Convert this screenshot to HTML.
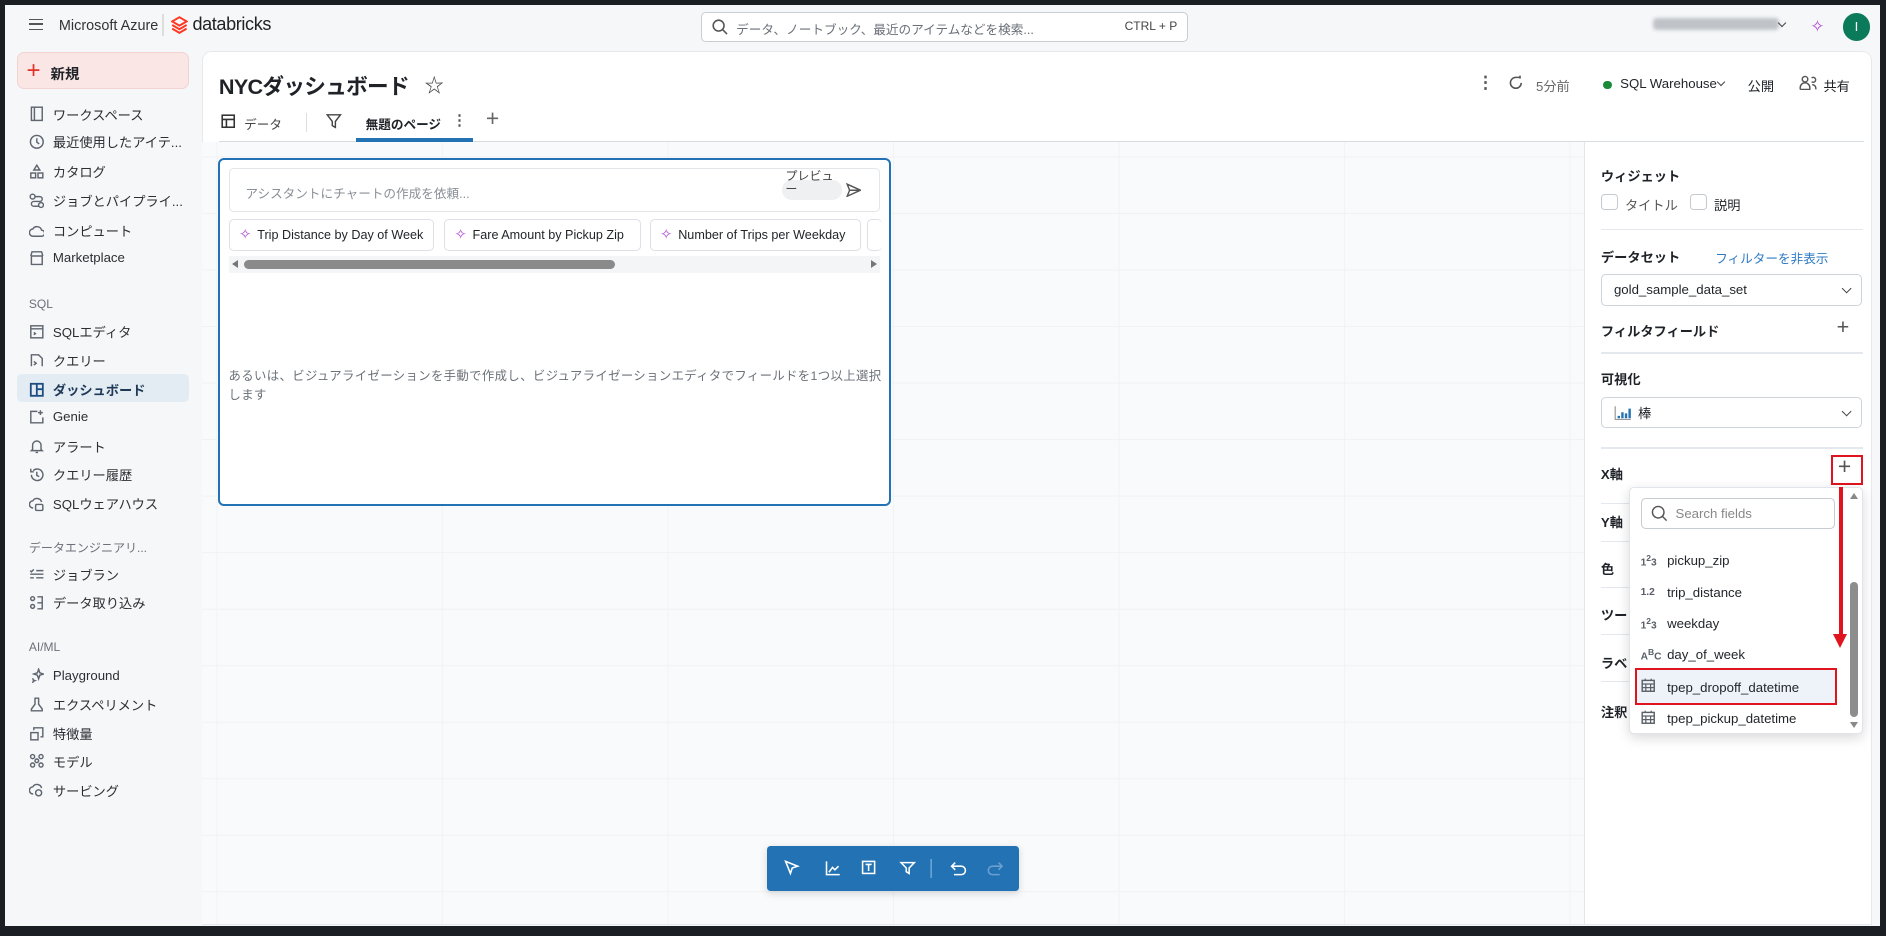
<!DOCTYPE html>
<html><head><meta charset="utf-8"><style>
*{box-sizing:border-box;margin:0;padding:0}
html,body{width:1886px;height:936px;overflow:hidden;background:#1b1f24}
#w{zoom:1.2028;position:relative;width:1568px;height:778px;background:#1b1f24;font-family:"Liberation Sans","Noto Sans CJK JP",sans-serif;color:#1f2328;font-size:11px}
.abs{position:absolute}
#app{left:4px;top:4px;width:1559px;height:766px;background:#f6f7f9}
.nav{position:absolute;left:24px;display:flex;align-items:center;font-size:11px;color:#2b2f33}
.nav svg{width:13px;height:13px;margin-right:7px;stroke:#5f6670;fill:none;stroke-width:1.2}
.sec{position:absolute;left:24px;font-size:10px;color:#6b7178}
.rp{position:absolute;font-size:11px}
.b{font-weight:bold}
.sel{position:absolute;left:1331px;width:217px;height:26px;border:1px solid #cfd4da;border-radius:4px;background:#fff;font-size:11px;display:flex;align-items:center;padding-left:10px}
.chev{position:absolute;right:9px;top:8px;width:6px;height:6px;border-right:1.3px solid #444;border-bottom:1.3px solid #444;transform:rotate(45deg)}
.hr{position:absolute;left:1331px;width:218px;height:1px;background:#e4e7eb}
.chip{position:absolute;top:182px;height:27px;border:1px solid #dde1e5;border-radius:4px;background:#fff;font-size:10.5px;display:flex;align-items:center;padding:0 8px;white-space:nowrap}
.spark{color:#b04fd6;margin-right:5px;font-size:12px}
.fi{position:absolute;left:1364px;display:flex;align-items:center;font-size:11px;color:#22262a}
.fi i{font-style:normal;width:22px;font-size:8.5px;color:#5a6068;font-weight:bold}
</style></head><body><div id="w">
<div id="app" class="abs"></div>
<!-- header -->
<div class="abs" style="left:24px;top:16px;width:12px;height:9px;border-top:1.5px solid #555;border-bottom:1.5px solid #555"><div style="margin-top:2.5px;height:1.5px;background:#555"></div></div>
<div class="abs" style="left:49px;top:15px;font-size:12px;color:#333">Microsoft Azure</div>
<div class="abs" style="left:135px;top:12px;width:1px;height:18px;background:#ddd"></div>
<svg class="abs" style="left:142px;top:13px" width="14" height="15" viewBox="0 0 14 15"><path d="M7 1L13 4.5 7 8 1 4.5Z M1 7.5L7 11 13 7.5 M1 10.5L7 14 13 10.5" fill="none" stroke="#ff3621" stroke-width="1.6"/></svg>
<div class="abs" style="left:160px;top:12px;font-size:15px;color:#222;letter-spacing:-0.3px">databricks</div>
<div class="abs" style="left:583px;top:10px;width:405px;height:25px;border:1px solid #c9ced4;border-radius:4px;background:#fff"></div>
<svg class="abs" style="left:592px;top:16px" width="13" height="13"><circle cx="5.5" cy="5.5" r="4.5" fill="none" stroke="#555" stroke-width="1.3"/><path d="M9 9l3.5 3.5" stroke="#555" stroke-width="1.3"/></svg>
<div class="abs" style="left:612px;top:16px;font-size:10.5px;color:#6a7078">データ、ノートブック、最近のアイテムなどを検索...</div>
<div class="abs" style="left:935px;top:16px;font-size:10px;color:#444">CTRL + P</div>
<div class="abs" style="left:1374px;top:15px;width:105px;height:10px;background:#bfc3c8;border-radius:3px;filter:blur(1.5px)"></div>
<div class="abs" style="left:1479px;top:17px;width:5px;height:5px;border-right:1.2px solid #444;border-bottom:1.2px solid #444;transform:rotate(45deg)"></div>
<div class="abs" style="left:1505px;top:13px;color:#b04fd6;font-size:14px">✧</div>
<div class="abs" style="left:1532px;top:11px;width:23px;height:23px;border-radius:50%;background:#0b7a5b;color:#fff;font-size:11px;text-align:center;line-height:23px">I</div>
<!-- sidebar -->
<div class="abs" style="left:14px;top:43px;width:143px;height:31px;background:#fbe6e6;border:1px solid #f3d2d2;border-radius:6px"></div>
<div class="abs" style="left:22px;top:47px;color:#e0332c;font-size:20px;font-weight:300">+</div>
<div class="abs b" style="left:42px;top:52px;font-size:12px">新規</div>
<div class="nav" style="top:87px"><svg viewBox="0 0 13 13"><rect x="2" y="1" width="9" height="11"/><path d="M4.5 1v11"/></svg>ワークスペース</div>
<div class="nav" style="top:110px"><svg viewBox="0 0 13 13"><circle cx="6.5" cy="6.5" r="5.3"/><path d="M6.5 3.5v3.3l2 1.4"/></svg>最近使用したアイテ...</div>
<div class="nav" style="top:135px"><svg viewBox="0 0 13 13"><path d="M6.5 1l2.5 4h-5z"/><rect x="1.5" y="7.5" width="4" height="4"/><rect x="7.5" y="7.5" width="4" height="4"/></svg>カタログ</div>
<div class="nav" style="top:159px"><svg viewBox="0 0 13 13"><circle cx="3" cy="3" r="2"/><circle cx="10" cy="10" r="2"/><path d="M5 3h4a2 2 0 010 4H4a2 2 0 000 4h4"/></svg>ジョブとパイプライ...</div>
<div class="nav" style="top:184px"><svg viewBox="0 0 13 13"><path d="M3.5 11a3 3 0 01-.3-6A4 4 0 0110.5 6a2.5 2.5 0 010 5z"/></svg>コンピュート</div>
<div class="nav" style="top:208px"><svg viewBox="0 0 13 13"><path d="M2 5h9v7H2zM1.5 5l1-3.5h8l1 3.5"/></svg>Marketplace</div>
<div class="sec" style="top:247px">SQL</div>
<div class="nav" style="top:268px"><svg viewBox="0 0 13 13"><rect x="1.5" y="1.5" width="10" height="10"/><path d="M1.5 4h10M4 7l1.3 1L4 9"/></svg>SQLエディタ</div>
<div class="nav" style="top:292px"><svg viewBox="0 0 13 13"><path d="M2 11V1.5h6l3 3V11"/><path d="M4 7l2 1.5L4 10"/></svg>クエリー</div>
<div class="abs" style="left:14px;top:311px;width:143px;height:23px;background:#e3ebf3;border-radius:4px"></div>
<div class="nav b" style="top:316px;color:#1e3a57"><svg viewBox="0 0 13 13" style="stroke:#1e4e80;stroke-width:1.5"><rect x="1.5" y="1.5" width="10" height="10"/><path d="M6.5 1.5v10M6.5 6h5"/></svg>ダッシュボード</div>
<div class="nav" style="top:340px"><svg viewBox="0 0 13 13"><path d="M11.5 7v4.5h-10V2H7"/><path d="M9.5 1v4M7.5 3h4"/></svg>Genie</div>
<div class="nav" style="top:363px"><svg viewBox="0 0 13 13"><path d="M3 9.5V6a3.5 3.5 0 017 0v3.5l1 1H2zM5.5 12h2"/></svg>アラート</div>
<div class="nav" style="top:387px"><svg viewBox="0 0 13 13"><path d="M2 6.5a4.8 4.8 0 101.5-3.5M1.5 1.5v2.5H4"/><path d="M6.5 4v3l2 1"/></svg>クエリー履歴</div>
<div class="nav" style="top:411px"><svg viewBox="0 0 13 13"><path d="M3.5 10a3 3 0 01-.3-6A4 4 0 0110.5 5"/><rect x="5.5" y="7" width="6" height="5" rx="1"/></svg>SQLウェアハウス</div>
<div class="sec" style="top:448px">データエンジニアリ...</div>
<div class="nav" style="top:470px"><svg viewBox="0 0 13 13"><path d="M1 3l1 1 2-2M6 3h6M1 9h3M6 9h6M1 6h11"/></svg>ジョブラン</div>
<div class="nav" style="top:493px"><svg viewBox="0 0 13 13"><circle cx="3" cy="3" r="1.6"/><circle cx="3" cy="9.5" r="1.6"/><path d="M7 1.5h4v10H7M7 6.5h4"/></svg>データ取り込み</div>
<div class="sec" style="top:532px">AI/ML</div>
<div class="nav" style="top:555px"><svg viewBox="0 0 13 13"><path d="M8 1l1 3 3 1-3 1-1 3-1-3-3-1 3-1zM3 8.5l.6 1.5 1.4.5-1.4.5L3 12.5"/></svg>Playground</div>
<div class="nav" style="top:578px"><svg viewBox="0 0 13 13"><path d="M4.5 1h4M5 1v5l-3 4v1.5h9V10L8 6V1"/></svg>エクスペリメント</div>
<div class="nav" style="top:602px"><svg viewBox="0 0 13 13"><rect x="1.5" y="5.5" width="6" height="6"/><path d="M4 3.5V1.5h7.5V9H9.5"/></svg>特徴量</div>
<div class="nav" style="top:625px"><svg viewBox="0 0 13 13"><circle cx="3" cy="3" r="1.7"/><circle cx="10" cy="3" r="1.7"/><circle cx="3" cy="10" r="1.7"/><circle cx="10" cy="10" r="1.7"/><circle cx="6.5" cy="6.5" r="1.5"/></svg>モデル</div>
<div class="nav" style="top:649px"><svg viewBox="0 0 13 13"><path d="M3.5 10a3 3 0 01-.3-6A4 4 0 0110.5 5"/><circle cx="8" cy="9" r="2.5"/></svg>サービング</div>
<!-- main panel -->
<div class="abs" style="left:168px;top:42px;width:1388px;height:727px;background:#fff;border:1px solid #e6e9ec;border-radius:8px 8px 0 0"></div>
<div class="abs" style="left:182px;top:58px;font-size:18px;font-weight:bold;letter-spacing:-0.6px">NYCダッシュボード</div>
<div class="abs" style="left:353px;top:58px;font-size:16px;color:#444">☆</div>
<div class="abs" style="left:1228px;top:60px;font-size:14px;color:#555;font-weight:bold">⋮</div>
<svg class="abs" style="left:1254px;top:62px" width="13" height="13"><path d="M11 6.5A4.5 4.5 0 116.5 2H10M10 0.5V3" fill="none" stroke="#555" stroke-width="1.3"/></svg>
<div class="abs" style="left:1277px;top:63px;font-size:11px;color:#666">5分前</div>
<div class="abs" style="left:1333px;top:67px;width:7px;height:7px;border-radius:50%;background:#1b8a3a"></div>
<div class="abs" style="left:1347px;top:63px;font-size:11px">SQL Warehouse</div>
<div class="abs" style="left:1428px;top:66px;width:5px;height:5px;border-right:1.2px solid #444;border-bottom:1.2px solid #444;transform:rotate(45deg)"></div>
<div class="abs" style="left:1453px;top:63px;font-size:11px">公開</div>
<svg class="abs" style="left:1496px;top:62px" width="15" height="13"><circle cx="5" cy="3.5" r="2.3" fill="none" stroke="#555" stroke-width="1.2"/><path d="M1 12v-1.5a4 4 0 018 0V12H1M10.5 2.5a2 2 0 110 3M11 8a3 3 0 013 3v1" fill="none" stroke="#555" stroke-width="1.2"/></svg>
<div class="abs" style="left:1516px;top:63px;font-size:11px">共有</div>
<!-- tabs -->
<svg class="abs" style="left:184px;top:95px" width="12" height="12"><rect x="1" y="1" width="10" height="10" fill="none" stroke="#333" stroke-width="1.3"/><path d="M1 4.5h10M4.5 4.5v6.5" stroke="#333" stroke-width="1.3"/></svg>
<div class="abs" style="left:203px;top:95px;font-size:10.5px;color:#444">データ</div>
<div class="abs" style="left:254px;top:94px;width:1px;height:16px;background:#ddd"></div>
<svg class="abs" style="left:271px;top:94px" width="13" height="13"><path d="M1 1.5h11L7.8 7v5L5.2 10.5V7z" fill="none" stroke="#444" stroke-width="1.2"/></svg>
<div class="abs b" style="left:304px;top:95px;font-size:10.5px">無題のページ</div>
<div class="abs" style="left:376px;top:94px;font-size:12px;color:#555;font-weight:bold">⋮</div>
<div class="abs" style="left:404px;top:87px;font-size:19px;color:#666;font-weight:300">+</div>
<div class="abs" style="left:182px;top:117px;width:1368px;height:1px;background:#d7dce1"></div>
<div class="abs" style="left:296px;top:115px;width:97px;height:3px;background:#2272b4"></div>
<!-- canvas -->
<div class="abs" style="left:168px;top:118px;width:1149px;height:650px;background-color:#f9fafb;background-image:linear-gradient(#f1f2f4 1px,transparent 1px),linear-gradient(90deg,#f2f3f5 1px,transparent 1px);background-size:100% 47px,187.5px 100%;background-position:0 12px,12px 0"></div>
<div class="abs" style="left:1317px;top:118px;width:1px;height:650px;background:#e3e6ea"></div>
<!-- widget -->
<div class="abs" style="left:181px;top:131px;width:560px;height:290px;background:#fff;border:2px solid #2272b4;border-radius:5px"></div>
<div class="abs" style="left:190px;top:140px;width:542px;height:36px;border:1px solid #e3e6e9;border-radius:4px;background:#fff"></div>
<div class="abs" style="left:204px;top:152px;font-size:10.5px;color:#8a9097">アシスタントにチャートの作成を依頼...</div>
<div class="abs" style="left:650px;top:150px;width:50px;height:16px;background:#eef0f2;border-radius:8px"></div>
<div class="abs" style="left:653px;top:141px;font-size:10px;color:#444;line-height:11px">プレビュ<br>ー</div>
<svg class="abs" style="left:703px;top:152px" width="13" height="12"><path d="M1 1l11 5-11 5 2-5zM3 6h8" fill="none" stroke="#555" stroke-width="1.2"/></svg>
<div class="chip" style="left:190px;width:171px"><span class="spark">✧</span>Trip Distance by Day of Week</div>
<div class="chip" style="left:369px;width:164px"><span class="spark">✧</span>Fare Amount by Pickup Zip</div>
<div class="chip" style="left:540px;width:176px"><span class="spark">✧</span>Number of Trips per Weekday</div>
<div class="chip" style="left:721px;width:12px;padding:0;border-right:none"></div>
<div class="abs" style="left:190px;top:213px;width:542px;height:14px;background:#f4f5f6"></div>
<div class="abs" style="left:193px;top:216px;width:0;height:0;border-top:4px solid transparent;border-bottom:4px solid transparent;border-right:5px solid #777"></div>
<div class="abs" style="left:724px;top:216px;width:0;height:0;border-top:4px solid transparent;border-bottom:4px solid transparent;border-left:5px solid #777"></div>
<div class="abs" style="left:203px;top:216px;width:308px;height:8px;background:#8a8a8a;border-radius:4px"></div>
<div class="abs" style="left:190px;top:305px;width:548px;font-size:10.3px;color:#6b7178;line-height:16px;letter-spacing:0.3px">あるいは、ビジュアライゼーションを手動で作成し、ビジュアライゼーションエディタでフィールドを1つ以上選択します</div>
<!-- toolbar -->
<div class="abs" style="left:638px;top:703px;width:209px;height:38px;background:#2272b4;border-radius:3px;box-shadow:0 2px 6px rgba(0,0,0,.15)"></div>
<svg class="abs" style="left:650px;top:714px" width="190" height="16" fill="none" stroke="#fff" stroke-width="1.3">
<path d="M3 2l10 4-4.5 1.5L7 12z"/>
<path d="M37 2v11h11M39 11l3-4 2 2 3-3"/>
<rect x="67" y="2" width="10" height="10"/><path d="M69.5 4.5h5M72 4.5v5.5"/>
<path d="M99 3h11l-4.3 4.5V12l-2.4-1.5V7.5z"/>
<path d="M124 0v16" stroke="#6ea6d6"/>
<path d="M141 6h8a3.5 3.5 0 010 7h-6M144 3l-3 3 3 3"/>
<path d="M183 6h-8a3.5 3.5 0 000 7h6M180 3l3 3-3 3" stroke="#6b9fcf"/>
</svg>
<!-- right panel -->
<div class="rp b" style="left:1331px;top:138px">ウィジェット</div>
<div class="abs" style="left:1331px;top:161px;width:14px;height:14px;border:1px solid #c5cad0;border-radius:3px"></div>
<div class="rp" style="left:1351px;top:162px;color:#555">タイトル</div>
<div class="abs" style="left:1405px;top:161px;width:14px;height:14px;border:1px solid #c5cad0;border-radius:3px"></div>
<div class="rp" style="left:1425px;top:162px">説明</div>
<div class="hr" style="top:190px"></div>
<div class="rp b" style="left:1331px;top:205px">データセット</div>
<div class="rp" style="left:1426px;top:206px;color:#2e7bc4;font-size:10.5px">フィルターを非表示</div>
<div class="sel" style="top:228px">gold_sample_data_set<div class="chev"></div></div>
<div class="rp b" style="left:1331px;top:267px">フィルタフィールド</div>
<div class="abs" style="left:1527px;top:261px;font-size:18px;color:#555;font-weight:300">+</div>
<div class="hr" style="top:293px"></div>
<div class="rp b" style="left:1331px;top:307px">可視化</div>
<div class="sel" style="top:330px"><svg width="14" height="13" style="margin-right:6px"><path d="M1 1v11h13" fill="none" stroke="#999"/><path d="M4 9v2M7 6v5M10 7v4M13 3v8" stroke="#2272b4" stroke-width="2"/></svg>棒<div class="chev"></div></div>
<div class="hr" style="top:372px"></div>
<div class="rp b" style="left:1331px;top:386px">X軸</div>
<div class="abs" style="left:1522px;top:378px;width:27px;height:25px;border:2px solid #e0141e"></div>
<div class="abs" style="left:1528px;top:377px;font-size:19px;color:#555;font-weight:300">+</div>
<div class="hr" style="top:418px"></div>
<div class="rp b" style="left:1331px;top:426px">Y軸</div>
<div class="hr" style="top:450px"></div>
<div class="rp b" style="left:1331px;top:465px">色</div>
<div class="hr" style="top:488px"></div>
<div class="rp b" style="left:1331px;top:503px">ツー</div>
<div class="hr" style="top:527px"></div>
<div class="rp b" style="left:1331px;top:543px">ラベ</div>
<div class="hr" style="top:566px"></div>
<div class="rp b" style="left:1331px;top:584px">注釈</div>
<!-- dropdown -->
<div class="abs" style="left:1354px;top:405px;width:195px;height:205px;background:#fff;border:1px solid #e1e4e8;border-radius:4px;box-shadow:0 3px 10px rgba(0,0,0,.15)"></div>
<div class="abs" style="left:1364px;top:414px;width:162px;height:26px;border:1px solid #c7ccd2;border-radius:4px"></div>
<svg class="abs" style="left:1373px;top:420px" width="14" height="14"><circle cx="6" cy="6" r="4.8" fill="none" stroke="#555" stroke-width="1.2"/><path d="M9.5 9.5l3.5 3.5" stroke="#555" stroke-width="1.2"/></svg>
<div class="abs" style="left:1393px;top:421px;font-size:11px;color:#888">Search fields</div>
<div class="abs" style="left:1538px;top:410px;width:0;height:0;border-left:4px solid transparent;border-right:4px solid transparent;border-bottom:5px solid #888"></div>
<div class="abs" style="left:1538px;top:600px;width:0;height:0;border-left:4px solid transparent;border-right:4px solid transparent;border-top:5px solid #888"></div>
<div class="abs" style="left:1538px;top:484px;width:7px;height:112px;background:#8d8d8d;border-radius:4px"></div>
<div class="abs" style="left:1359px;top:555px;width:168px;height:31px;background:#edf3f9;border:2px solid #e0141e"></div>
<div class="fi" style="top:460px"><i>1<sup>2</sup>3</i>pickup_zip</div>
<div class="fi" style="top:486px"><i>1.2</i>trip_distance</div>
<div class="fi" style="top:512px"><i>1<sup>2</sup>3</i>weekday</div>
<div class="fi" style="top:538px"><i>A<sup>B</sup>C</i>day_of_week</div>
<div class="fi" style="top:564px"><i><svg width="12" height="12"><rect x="1" y="2" width="10" height="9" fill="none" stroke="#5a6068" stroke-width="1.2"/><path d="M1 5h10M4 5v6M8 5v6M1 8h10M3.5 0.5v2M8.5 0.5v2" stroke="#5a6068"/></svg></i>tpep_dropoff_datetime</div>
<div class="fi" style="top:590px"><i><svg width="12" height="12"><rect x="1" y="2" width="10" height="9" fill="none" stroke="#5a6068" stroke-width="1.2"/><path d="M1 5h10M4 5v6M8 5v6M1 8h10M3.5 0.5v2M8.5 0.5v2" stroke="#5a6068"/></svg></i>tpep_pickup_datetime</div>
<!-- red arrow -->
<div class="abs" style="left:1529px;top:405px;width:3px;height:125px;background:#e0141e"></div>
<div class="abs" style="left:1524px;top:527px;width:0;height:0;border-left:6.5px solid transparent;border-right:6.5px solid transparent;border-top:12px solid #e0141e"></div>
</div></body></html>
